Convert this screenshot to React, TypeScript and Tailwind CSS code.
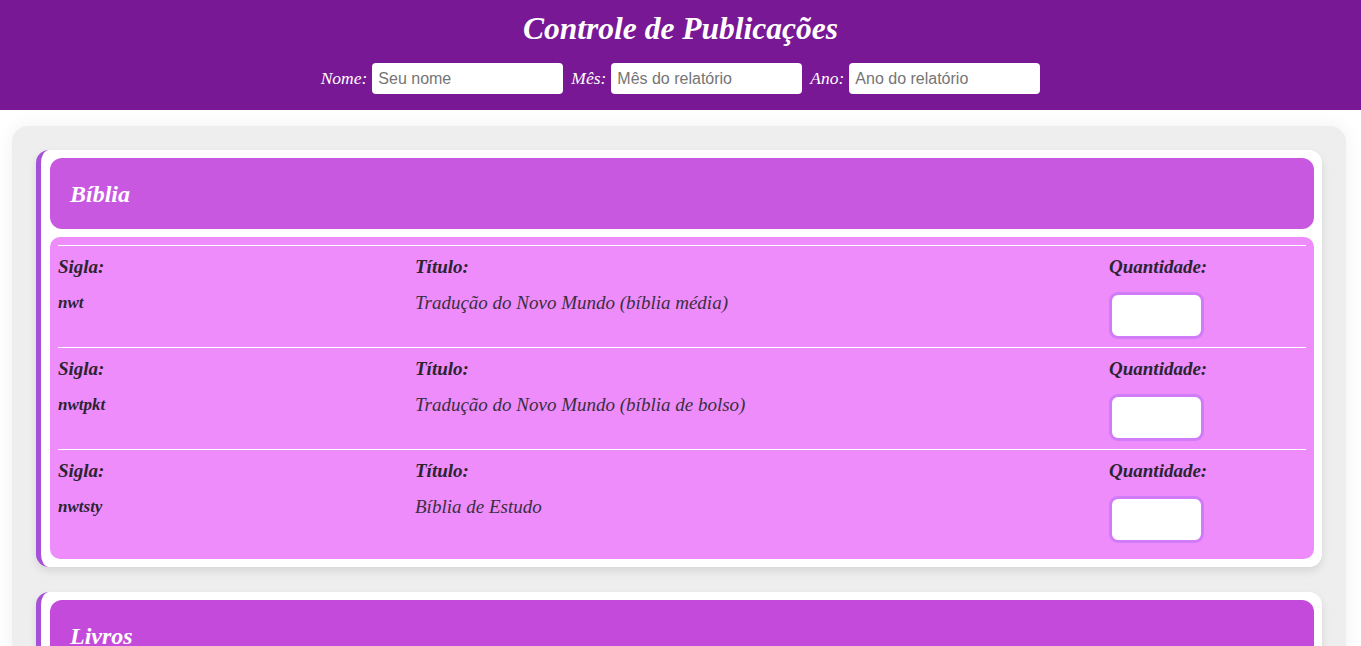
const serif = "font-['Liberation_Serif','Times_New_Roman',serif]";

type Item = { sigla: string; titulo: string };

const biblia: Item[] = [
  { sigla: "nwt", titulo: "Tradução do Novo Mundo (bíblia média)" },
  { sigla: "nwtpkt", titulo: "Tradução do Novo Mundo (bíblia de bolso)" },
  { sigla: "nwtsty", titulo: "Bíblia de Estudo" },
];

function HeaderField({ label, placeholder }: { label: string; placeholder: string }) {
  return (
    <label className="flex items-center gap-[5px]">
      <span className={`${serif} italic text-[17.5px] text-white`}>{label}</span>
      <input
        placeholder={placeholder}
        className="h-[31px] w-[191px] rounded-[4px] bg-white px-[6px] font-['Liberation_Sans',Arial,sans-serif] text-[16px] text-gray-700 placeholder:text-[#757575] outline-none"
      />
    </label>
  );
}

function Row({ item }: { item: Item }) {
  return (
    <div className="border-t border-white pt-[10px] pb-[8px] text-[#2b2430]">
      <div className="grid grid-cols-[357px_694px_1fr]">
        <div>
          <div className="text-[19px] font-bold italic leading-[22px]">Sigla:</div>
          <div className="mt-[15px] text-[17px] font-bold italic leading-[20px]">{item.sigla}</div>
        </div>
        <div>
          <div className="text-[19px] font-bold italic leading-[22px]">Título:</div>
          <div className="mt-[15px] text-[19px] italic leading-[20px] text-[#3a2f40]">{item.titulo}</div>
        </div>
        <div>
          <div className="text-[19px] font-bold italic leading-[22px]">Quantidade:</div>
          <input className="mt-[14px] block h-[47px] w-[95px] rounded-[9px] border-[3px] border-[#d07bf7] bg-white outline-none" />
        </div>
      </div>
    </div>
  );
}

function Section({ title, items, headBg }: { title: string; items: Item[]; headBg: string }) {
  return (
    <div className="rounded-[13px] border-l-[5px] border-[#a64fd9] bg-white py-2 pl-[9px] pr-2 shadow-[0_4px_8px_rgba(0,0,0,0.1)]">
      <div className={`flex h-[71px] items-center rounded-[12px] px-5 ${headBg}`}>
        <h2 className={`${serif} text-[24px] font-bold italic text-white`}>{title}</h2>
      </div>
      {items.length > 0 && (
        <div className={`${serif} mt-2 rounded-[10px] bg-[#ee8cfc] px-2 pt-2 pb-[8px]`}>
          {items.map((it) => (
            <Row key={it.sigla} item={it} />
          ))}
        </div>
      )}
    </div>
  );
}

export default function App() {
  return (
    <div className="min-h-screen bg-white">
      <header className="flex h-[110px] flex-col items-center bg-[#781895] pt-[10px]">
        <h1 className={`${serif} text-[31.5px] font-bold italic leading-[38px] text-white`}>
          Controle de Publicações
        </h1>
        <div className="mt-[15px] flex items-center gap-[8px]">
          <HeaderField label="Nome:" placeholder="Seu nome" />
          <HeaderField label="Mês:" placeholder="Mês do relatório" />
          <HeaderField label="Ano:" placeholder="Ano do relatório" />
        </div>
      </header>
      <main className="mt-4 ml-3 mr-[15px] rounded-[16px] bg-[#eeeeee] px-6 pt-6 pb-6 shadow-[0_0_20px_rgba(0,0,0,0.06)]">
        <div className="flex flex-col gap-[25px]">
          <Section title="Bíblia" items={biblia} headBg="bg-[#c858e0]" />
          <Section title="Livros" items={[]} headBg="bg-[#c44adb]" />
        </div>
      </main>
    </div>
  );
}
